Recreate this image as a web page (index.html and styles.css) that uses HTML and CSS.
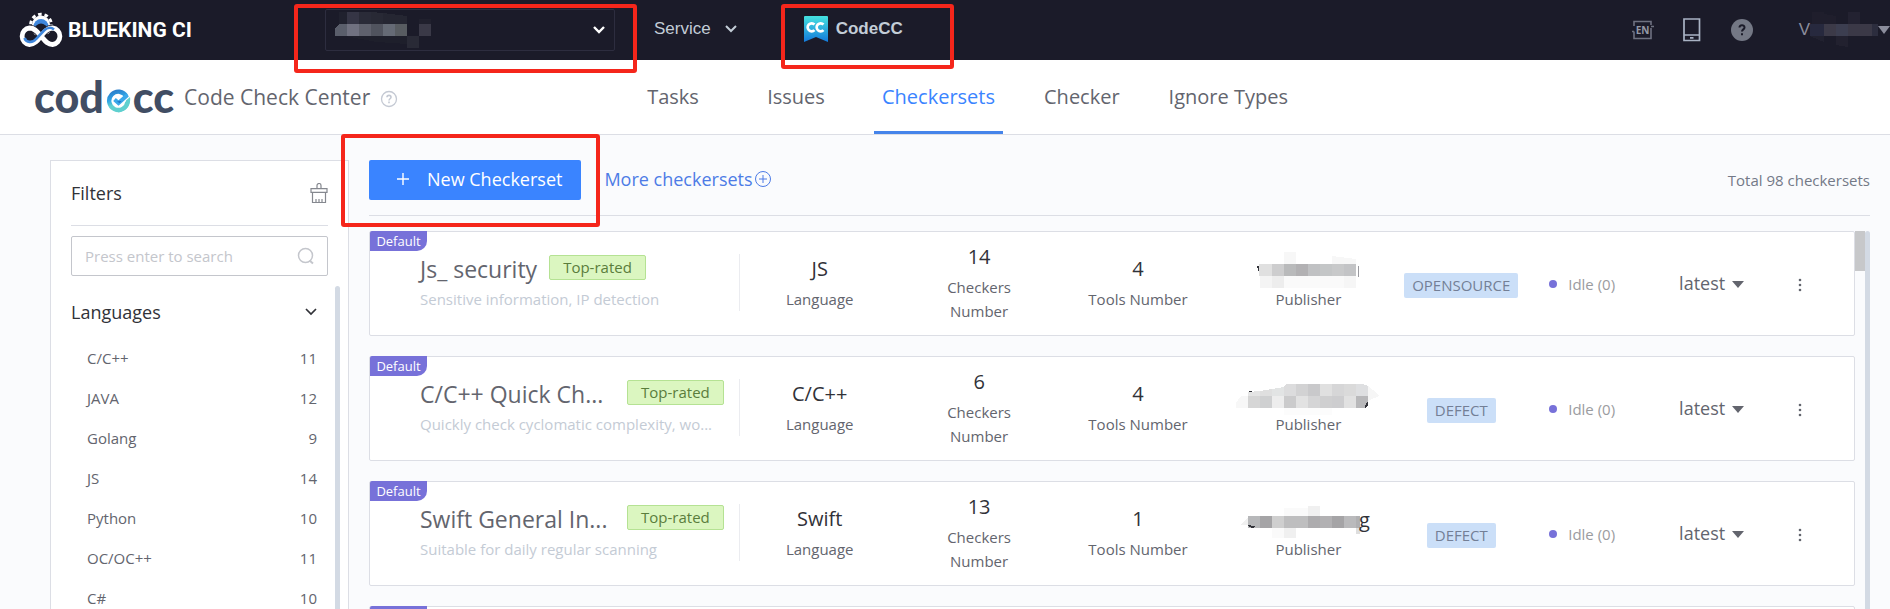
FILE: index.html
```html
<!DOCTYPE html>
<html lang="en">
<head>
<meta charset="utf-8">
<title>CodeCC - Checkersets</title>
<link rel="stylesheet" href="styles.css">
</head>
<body>
<header class="topbar">
  <a class="brand" href="#">
    <svg class="brand-mark" width="44" height="36" viewBox="0 0 44 36" aria-hidden="true">
      <circle cx="22" cy="12.500" r="9" fill="#fff"/>
      <circle cx="22" cy="12.500" r="10.300" fill="none" stroke="#fff" stroke-width="3" stroke-dasharray="3.600 2.870"/>
      <path d="M14.500 14.500a7.500 7.500 0 0 1 15 0l-7.500 8z" fill="#3f87dc"/>
      <path d="M16 17.500a6 6 0 0 1 12 0l-6 6z" fill="#1b1b29"/>
      <path d="M22 24c-3 4-6 8.500-11.500 8.500A8.300 8.300 0 0 1 10.500 16C16 16 18.500 20 22 24s6 8.500 11.500 8.500a8.300 8.300 0 0 0 0-16.500C28 16 25 20 22 24z" fill="none" stroke="#1b1b29" stroke-width="6.500"/>
      <path d="M22 24c-3 4-6 8.500-11.500 8.500A8.300 8.300 0 0 1 10.500 16C16 16 18.500 20 22 24s6 8.500 11.500 8.500a8.300 8.300 0 0 0 0-16.500C28 16 25 20 22 24z" fill="none" stroke="#fff" stroke-width="4.800"/>
      <path d="M5.500 26c1.500 4.500 8 5.500 11.500 1l8-8.500c3-3 7-3.500 10-1" fill="none" stroke="#3f87dc" stroke-width="2.600"/>
    </svg>
    <span class="brand-name">BLUEKING CI</span>
  </a>
  <div class="project">
    <select class="project-select" aria-label="Project"><option></option></select>
    <svg class="project-mask" width="96" height="36" viewBox="336 12 96 36" shape-rendering="crispEdges" aria-hidden="true">
      <path d="M340 12h8v12h-8z" fill="#20212e"/><path d="M348 12h12v12h-12z" fill="#353545"/><path d="M360 12h12v12h-12z" fill="#2a2b38"/><path d="M372 12l12 1v11h-12z" fill="#282935"/><path d="M384 13l24 3v8h-24z" fill="#252632"/>
      <path d="M336 28l4-4h8v12h-12z" fill="#5a5e6b"/><path d="M348 24h12v12h-12z" fill="#707180"/><path d="M360 24h12v12h-12z" fill="#5f616d"/><path d="M372 24h12v12h-12z" fill="#50535e"/><path d="M384 24h12v12h-12z" fill="#656a75"/><path d="M396 24h12v12h-12z" fill="#585c61"/>
      <path d="M346 36h62v8l-30-2z" fill="#1e1f2b"/><path d="M408 36h12v12h-12z" fill="#292a36"/><path d="M420 19h12v5h-12z" fill="#20202d"/><path d="M420 24h12v12h-12z" fill="#3a3947"/>
    </svg>
    <svg class="project-arrow" width="14" height="10" viewBox="0 0 14 10" aria-hidden="true"><path d="M2 2l5 5 5-5" fill="none" stroke="#fff" stroke-width="2.400"/></svg>
  </div>
  <button class="service" type="button">Service
    <svg width="14" height="10" viewBox="0 0 14 10" aria-hidden="true"><path d="M2 2l5 5 5-5" fill="none" stroke="#c3cdd7" stroke-width="2"/></svg>
  </button>
  <a class="product" href="#">
    <svg width="26" height="26" viewBox="0 0 26 26" aria-hidden="true">
      <defs><linearGradient id="flag" x1="0" y1="0" x2="0" y2="1"><stop offset="0" stop-color="#45e2e0"/><stop offset="1" stop-color="#1379db"/></linearGradient></defs>
      <path d="M2 0h22a1 1 0 0 1 1 1v25l-12-5-12 5V1a1 1 0 0 1 1-1z" fill="url(#flag)"/>
      <path d="M11.500 8.500a4 4 0 1 0 0 5.600M20.500 8.500a4 4 0 1 0 0 5.600" fill="none" stroke="#fff" stroke-width="2.700"/>
    </svg>
    <span>CodeCC</span>
  </a>
  <div class="tools">
    <button type="button" class="icon-btn" aria-label="Language">
      <svg width="22" height="22" viewBox="0 0 22 22" aria-hidden="true"><path d="M2 7V2.500h17V6M2 12.500V19.500h17V9M0 12.500h2M19 7.500h3" fill="none" stroke="#6e7180" stroke-width="1.600"/><text x="10.500" y="14.500" class="lang-code">EN</text></svg>
    </button>
    <button type="button" class="icon-btn" aria-label="Mobile">
      <svg width="18" height="24" viewBox="0 0 18 24" aria-hidden="true"><path d="M1 1h15.500v21.500H1zM1 17h16M7 19.800h3.500" fill="none" stroke="#a9b3c4" stroke-width="1.700"/></svg>
    </button>
    <button type="button" class="icon-btn" aria-label="Help">
      <svg width="24" height="24" viewBox="0 0 24 24" aria-hidden="true"><circle cx="12" cy="12" r="11" fill="#747885"/><path d="M9.500 9.600c0-3.200 5-3.200 5-.2 0 2-2.500 2-2.500 4.200" fill="none" stroke="#1b1b29" stroke-width="2"/><path d="M11 15.200h2v2h-2z" fill="#1b1b29"/></svg>
    </button>
    <button type="button" class="user" aria-label="Account"><span>V</span>
      <svg width="68" height="36" viewBox="1810 12 68 36" shape-rendering="crispEdges" aria-hidden="true">
        <path d="M1812 12h12v12h-12z" fill="#1f1e2c"/><path d="M1824 14l12 2v8h-12z" fill="#1f1e2c"/><path d="M1848 12h12v12h-12z" fill="#232231"/>
        <path d="M1810 24h14v12h-14z" fill="#27293e"/><path d="M1824 24h12v12h-12z" fill="#3c3a48"/><path d="M1836 24h12v12h-12z" fill="#3c3e50"/><path d="M1848 24h24v12h-24z" fill="#3b3947"/><path d="M1872 24h6v12h-6z" fill="#2c2d3e"/>
        <path d="M1810 36h14v6z" fill="#21212f"/><path d="M1836 36h12v11l-12-2z" fill="#22212f"/>
      </svg>
      <svg width="12" height="8" viewBox="0 0 12 8" aria-hidden="true"><path d="M0 0h12L6 8z" fill="#8b8d9c"/></svg>
    </button>
  </div>
</header>

<div class="subbar">
  <div class="title">
    <span class="wordmark"><span>cod</span><svg width="25" height="24" viewBox="0 0 24 24" aria-hidden="true">
        <defs><linearGradient id="swirl" x1="0" y1="0" x2="0.300" y2="1"><stop offset="0" stop-color="#2b7cc9"/><stop offset="0.450" stop-color="#2fa5e6"/><stop offset="0.750" stop-color="#5fd0cf"/></linearGradient></defs>
        <path d="M20 7.500A9.200 9.200 0 1 0 21 13" fill="none" stroke="url(#swirl)" stroke-width="4.400"/>
        <path d="M8 10.500l4 3.500 9-8" fill="none" stroke="#3aa8ea" stroke-width="4"/>
        <path d="M10.500 12.500l2.500 1.500 2-2z" fill="#1f6fc0"/>
        <path d="M23.500 8c1.500 9-5 14.500-11.500 15.500l-2-3.500c6 0 9-3 9.500-8.500z" fill="#5fd0cf"/>
      </svg><span>cc</span></span>
    <h1>Code Check Center</h1>
    <svg class="title-help" width="18" height="18" viewBox="0 0 18 18" aria-hidden="true"><circle cx="9" cy="9" r="7.500" fill="none" stroke="#c4c9d3" stroke-width="1.300"/><path d="M7 7.300c0-2.600 4-2.500 4-.1 0 1.500-2 1.600-2 3.300M9 11.600v1.700" fill="none" stroke="#c4c9d3" stroke-width="1.600"/></svg>
  </div>
  <nav class="nav">
    <a href="#">Tasks</a><a href="#">Issues</a><a href="#" class="active" aria-current="page">Checkersets</a><a href="#">Checker</a><a href="#">Ignore Types</a>
  </nav>
</div>

<div class="page">
  <aside class="filters">
    <div class="filters-head">
      <h2>Filters</h2>
      <button type="button" class="icon-btn" aria-label="Clear filters">
        <svg width="18" height="21" viewBox="0 0 18 21" aria-hidden="true"><path d="M7 5.500V2.500a2 2 0 0 1 4 0v3M1 5.700h16v3.600H1zM2.500 9.300v10.200h13V9.300M6 16v3.500M9 16v3.500M12 16v3.500" fill="none" stroke="#85888f" stroke-width="1.200"/></svg>
      </button>
    </div>
    <div class="search">
      <input type="text" placeholder="Press enter to search" aria-label="Search checkersets">
      <svg width="18" height="18" viewBox="0 0 18 18" aria-hidden="true"><circle cx="8.500" cy="8.500" r="7" fill="none" stroke="#c4c6cc" stroke-width="1.500"/><path d="M12.500 13.500l3.500 3" stroke="#c4c6cc" stroke-width="2"/></svg>
    </div>
    <div class="filter-scroll">
      <section class="filter-group">
        <button type="button" class="group-head">Languages
          <svg width="12" height="8" viewBox="0 0 12 8" aria-hidden="true"><path d="M1 1l5 5 5-5" fill="none" stroke="#313238" stroke-width="1.700"/></svg>
        </button>
        <ul>
          <li><span>C/C++</span><span>11</span></li>
          <li><span>JAVA</span><span>12</span></li>
          <li><span>Golang</span><span>9</span></li>
          <li><span>JS</span><span>14</span></li>
          <li><span>Python</span><span>10</span></li>
          <li><span>OC/OC++</span><span>11</span></li>
          <li><span>C#</span><span>10</span></li>
        </ul>
      </section>
      <div class="thin-bar"></div>
    </div>
  </aside>

  <main class="main">
    <div class="actions">
      <button type="button" class="primary"><svg width="14" height="14" viewBox="0 0 14 14" aria-hidden="true"><path d="M7 1v12M1 7h12" stroke="#fff" stroke-width="1.400"/></svg>New Checkerset</button>
      <a class="more-link" href="#">More checkersets<svg width="18" height="18" viewBox="0 0 18 18" aria-hidden="true"><circle cx="9" cy="9" r="7.500" fill="none" stroke="#4d7be6"/><path d="M9 5v8M5 9h8" stroke="#4d7be6"/></svg></a>
      <span class="total">Total 98 checkersets</span>
    </div>
    <div class="list-wrap">
      <div class="list">
        <article class="card">
          <span class="badge">Default</span>
          <div class="info">
            <div class="info-title"><h3>Js_ security</h3><span class="rated">Top-rated</span></div>
            <p>Sensitive information, IP detection</p>
          </div>
          <div class="stat"><b>JS</b><span>Language</span></div>
          <div class="stat"><b>14</b><span>Checkers Number</span></div>
          <div class="stat"><b>4</b><span>Tools Number</span></div>
          <div class="stat">
            <svg class="mask" width="150" height="28" viewBox="0 0 150 28" shape-rendering="crispEdges" aria-hidden="true">
              <path d="M51-3h12V9H51zM99 1l24 3v5H99z" fill="#f7f7f7"/><path d="M24 11l2 0v7z" fill="#33343a"/>
              <path d="M26 9h13v12H26z" fill="#e0e0e0"/><path d="M39 9h12v12H39z" fill="#cdcdce"/><path d="M51 9h12v12H51z" fill="#b9babb"/><path d="M63 9h12v12H63z" fill="#b2b1b3"/><path d="M75 9h12v12H75z" fill="#c0c1c3"/><path d="M87 9h12v12H87z" fill="#c4c6c7"/><path d="M99 9h12v12H99z" fill="#c8c9ca"/><path d="M111 9h12v12h-12z" fill="#c3c4c6"/><path d="M125 11h1v11h-1z" fill="#9a9aa0"/>
              <path d="M27 21h12v12H27z" fill="#f4f4f4"/><path d="M39 21h12v12H39z" fill="#ededed"/><path d="M51 21h60v12H51z" fill="#fafafa"/><path d="M111 21h12v12h-12z" fill="#f6f6f6"/>
            </svg><span>Publisher</span></div>
          <div class="tag-cell"><span class="tag">OPENSOURCE</span></div>
          <div class="status"><i></i>Idle (0)</div>
          <button type="button" class="version">latest<svg width="12" height="7" viewBox="0 0 12 7" aria-hidden="true"><path d="M0 0h12L6 7z" fill="#63656e"/></svg></button>
          <button type="button" class="kebab" aria-label="More"><svg width="4" height="14" viewBox="0 0 4 14" aria-hidden="true"><circle cx="2" cy="2" r="1.300"/><circle cx="2" cy="7" r="1.300"/><circle cx="2" cy="12" r="1.300"/></svg></button>
        </article>
        <article class="card">
          <span class="badge">Default</span>
          <div class="info">
            <div class="info-title clipped"><h3>C/C++ Quick Ch...</h3><span class="rated">Top-rated</span></div>
            <p>Quickly check cyclomatic complexity, wo...</p>
          </div>
          <div class="stat"><b>C/C++</b><span>Language</span></div>
          <div class="stat"><b>6</b><span>Checkers Number</span></div>
          <div class="stat"><b>4</b><span>Tools Number</span></div>
          <div class="stat">
            <svg class="mask" width="150" height="28" viewBox="0 0 150 28" shape-rendering="crispEdges" aria-hidden="true">
              <path d="M15 12l12-1v5H15z" fill="#e4e4e4"/><path d="M27 11l12-2v7H27z" fill="#dfdfdf"/><path d="M39 9l12-2v9H39z" fill="#e2e4e4"/><path d="M51 6l2-2h10v12H51z" fill="#dcdcdd"/><path d="M63 4h12v12H63z" fill="#d2d2d3"/><path d="M75 4h12v12H75z" fill="#c9c9cb"/><path d="M87 4h12v12H87z" fill="#e0e0e0"/><path d="M99 4h12v12H99z" fill="#d6d6d7"/><path d="M111 4h12v12h-12z" fill="#dadada"/><path d="M123 4h7l5 2v10h-12z" fill="#dedfe1"/><path d="M135 6l9 7 2 3-11 5z" fill="#f6f6f6"/>
              <path d="M3 28v-5l5-7h7v12z" fill="#f7f7f7"/><path d="M15 16h12v12H15z" fill="#d6d6d6"/><path d="M27 16h12v12H27z" fill="#cfd0d1"/><path d="M39 16h12v12H39z" fill="#ededed"/><path d="M51 16h12v12H51z" fill="#cbcbcc"/><path d="M63 16h12v12H63z" fill="#e2e2e2"/><path d="M75 16h12v12H75z" fill="#d5d5d6"/><path d="M87 16h12v12H87z" fill="#cfcfd0"/><path d="M99 16h12v12H99z" fill="#cdcdcf"/><path d="M111 16h12v12h-12z" fill="#e1e1e1"/><path d="M123 16h12v8l-2 4h-10z" fill="#b8b8ba"/>
              <path d="M16 11h3v1h-3zM135 21v4l-3 3v-2z" fill="#33343a"/><path d="M51 28h48v7H51z" fill="#fcfcfc"/>
            </svg><span>Publisher</span></div>
          <div class="tag-cell"><span class="tag">DEFECT</span></div>
          <div class="status"><i></i>Idle (0)</div>
          <button type="button" class="version">latest<svg width="12" height="7" viewBox="0 0 12 7" aria-hidden="true"><path d="M0 0h12L6 7z" fill="#63656e"/></svg></button>
          <button type="button" class="kebab" aria-label="More"><svg width="4" height="14" viewBox="0 0 4 14" aria-hidden="true"><circle cx="2" cy="2" r="1.300"/><circle cx="2" cy="7" r="1.300"/><circle cx="2" cy="12" r="1.300"/></svg></button>
        </article>
        <article class="card">
          <span class="badge">Default</span>
          <div class="info">
            <div class="info-title clipped"><h3>Swift General In...</h3><span class="rated">Top-rated</span></div>
            <p>Suitable for daily regular scanning</p>
          </div>
          <div class="stat"><b>Swift</b><span>Language</span></div>
          <div class="stat"><b>13</b><span>Checkers Number</span></div>
          <div class="stat"><b>1</b><span>Tools Number</span></div>
          <div class="stat">
            <svg class="mask" width="150" height="28" viewBox="0 0 150 28" shape-rendering="crispEdges" aria-hidden="true">
              <path d="M51 3h24v8H51zM39 23h12v10H39z" fill="#fafafa"/><path d="M75 1h12v10H75zM51 23h12v10H51zM7 20l8-8v8z" fill="#f0f0f0"/>
              <path d="M15 11h12v12H15z" fill="#b7b8ba"/><path d="M27 11h12v12H27z" fill="#a5a4a6"/><path d="M39 11h12v12H39z" fill="#cfcfcf"/><path d="M51 11h24v12H51z" fill="#bebebf"/><path d="M75 11h12v12H75z" fill="#adacae"/><path d="M87 11h12v12H87z" fill="#b2b1b3"/><path d="M99 11h12v12H99z" fill="#a5a4a6"/><path d="M111 11h12v12h-12z" fill="#bababc"/><path d="M123 11h4v12h-4z" fill="#b0b0b2"/><path d="M123 23h4v6h-4z" fill="#dedede"/>
              <path d="M15 20h2l2 1h3v1l-3 1-3-1z" fill="#33343a"/><text x="126" y="22" class="mask-text">g</text>
            </svg><span>Publisher</span></div>
          <div class="tag-cell"><span class="tag">DEFECT</span></div>
          <div class="status"><i></i>Idle (0)</div>
          <button type="button" class="version">latest<svg width="12" height="7" viewBox="0 0 12 7" aria-hidden="true"><path d="M0 0h12L6 7z" fill="#63656e"/></svg></button>
          <button type="button" class="kebab" aria-label="More"><svg width="4" height="14" viewBox="0 0 4 14" aria-hidden="true"><circle cx="2" cy="2" r="1.300"/><circle cx="2" cy="7" r="1.300"/><circle cx="2" cy="12" r="1.300"/></svg></button>
        </article>
        <article class="card"><span class="badge"></span></article>
      </div>
      <div class="thick-bar"></div>
      <div class="thin-bar"></div>
    </div>
  </main>
</div>

<div class="callout callout-project"></div>
<div class="callout callout-product"></div>
<div class="callout callout-new"></div>
</body>
</html>
```

FILE: styles.css
```css
* { box-sizing: border-box; }

body {
  margin: 0;
  height: 100vh;
  overflow: hidden;
  display: flex;
  flex-direction: column;
  position: relative;
  background: #fafbfd;
  color: #63656e;
  font: 15px/24px "Open Sans", "Noto Sans", sans-serif;
}

h1, h2, h3, p, ul { margin: 0; padding: 0; font-weight: 400; }
ul { list-style: none; }
a { color: inherit; text-decoration: none; }
svg { display: block; flex: none; }
button {
  margin: 0;
  padding: 0;
  border: 0;
  background: none;
  color: inherit;
  font: inherit;
  cursor: pointer;
}

/* Top bar */
.topbar {
  flex: none;
  height: 60px;
  display: flex;
  align-items: center;
  background: #1b1b29;
  color: #c3cdd7;
  font: 17px/24px "Liberation Sans", Arial, sans-serif;
}
.brand {
  width: 325px;
  padding-left: 19px;
  display: flex;
  align-items: center;
  gap: 5px;
}
.brand-name {
  color: #fff;
  font: bold 21px/28px Roboto, "Liberation Sans", sans-serif;
}
.project { position: relative; width: 290px; }
.project-select {
  display: block;
  width: 100%;
  height: 42px;
  appearance: none;
  background: transparent;
  border: 1px solid #2d2d3f;
  border-radius: 2px;
  color: #fff;
}
.project-mask { position: absolute; left: 10px; top: 3px; pointer-events: none; }
.project-arrow { position: absolute; right: 9px; top: 16px; pointer-events: none; }
.service { display: flex; align-items: center; gap: 13px; margin-left: 39px; padding-bottom: 2px; }
.product { display: flex; align-items: center; gap: 7px; margin-left: 65px; padding-bottom: 3px; font-weight: 700; }
.tools { margin-left: auto; display: flex; align-items: center; gap: 29px; }
.lang-code { font: bold 10px "Open Sans", sans-serif; fill: #9599a5; text-anchor: middle; }
.user { display: flex; align-items: center; margin-left: 16px; color: #8b8d9c; }

/* Product bar */
.subbar {
  flex: none;
  height: 75px;
  display: flex;
  background: #fff;
  border-bottom: 1px solid #dcdee5;
}
.title { width: 628px; padding-left: 34px; display: flex; align-items: center; gap: 10px; }
.title h1 { font-size: 21px; line-height: 28px; }
.title-help { margin-top: 4px; }
.wordmark { display: flex; align-items: baseline; gap: 2px; color: #414d63; font: 900 43px/48px Lato, sans-serif; }
.nav { display: flex; gap: 33px; font-size: 20px; }
.nav a {
  min-width: 90px;
  padding: 0 8px;
  display: flex;
  align-items: center;
  justify-content: center;
  border-top: 3px solid transparent;
  border-bottom: 3px solid transparent;
}
.nav .active { color: #3a84ff; border-bottom-color: #4584ea; }

/* Page */
.page { flex: 1; min-height: 0; display: flex; gap: 19px; padding: 25px 20px 0 50px; }

.filters {
  flex: none;
  width: 299px;
  display: flex;
  flex-direction: column;
  overflow: hidden;
  background: #fff;
  border: 1px solid #dcdee5;
  border-bottom: 0;
}
.filters-head {
  flex: none;
  height: 65px;
  margin: 0 20px;
  display: flex;
  align-items: center;
  justify-content: space-between;
  border-bottom: 1px solid #dcdee5;
}
.filters h2 { color: #313238; font-size: 18px; }
.search { flex: none; position: relative; margin: 10px 20px; }
.search input {
  display: block;
  width: 100%;
  height: 40px;
  padding: 0 40px 0 13px;
  border: 1px solid #c4c6cc;
  border-radius: 2px;
  background: #fff;
  color: #63656e;
  font: inherit;
}
.search input::placeholder { color: #c4c6cc; opacity: 1; }
.search svg { position: absolute; right: 13px; top: 11px; }
.filter-scroll { flex: 1; min-height: 0; display: flex; gap: 18px; padding: 0 8px 0 20px; }
.filter-group { flex: 1; }
.group-head {
  width: 100%;
  height: 52px;
  display: flex;
  align-items: center;
  justify-content: space-between;
  color: #313238;
  font-size: 18px;
}
.filter-group li { height: 40px; display: flex; align-items: center; justify-content: space-between; padding-left: 16px; }
.thin-bar { flex: none; width: 5px; border-radius: 3px 3px 0 0; background: #d3dae4; }

.main { flex: 1; min-width: 0; margin-left: 1px; display: flex; flex-direction: column; }
.actions {
  flex: none;
  height: 56px;
  display: flex;
  align-items: flex-start;
  line-height: 38px;
  border-bottom: 1px solid #dcdee5;
  font-size: 18px;
}
.primary {
  height: 40px;
  padding: 0 19px 2px 27px;
  display: flex;
  align-items: center;
  gap: 17px;
  border-radius: 2px;
  background: #3a84ff;
  color: #fff;
}
.more-link { margin-left: 23px; display: flex; align-items: center; gap: 1px; color: #4d7be6; }
.total { margin-left: auto; color: #737987; font-size: 15px; line-height: 40px; }

.list-wrap { flex: 1; min-height: 0; margin-top: 15px; display: flex; overflow: hidden; }
.list { flex: 1; min-width: 0; display: flex; flex-direction: column; gap: 20px; }
.thick-bar { flex: none; width: 10px; height: 40px; background: #c7c8ca; }

.card {
  flex: none;
  position: relative;
  height: 105px;
  padding: 0 0 2px 50px;
  display: grid;
  grid-template-columns: 320fr 160fr 159fr 159fr 182fr 124fr 156fr 106fr 69fr;
  align-items: center;
  background: #fff;
  border: 1px solid #dcdee5;
  border-radius: 2px;
}
.badge {
  position: absolute;
  left: 0;
  top: -1px;
  width: 57px;
  height: 20px;
  border-radius: 2px 0 10px 0;
  background: #7771d9;
  color: #fff;
  font-size: 13px;
  line-height: 20px;
  text-align: center;
}
.info { min-width: 0; padding-right: 15px; border-right: 1px solid #ebecf0; }
.info-title { display: flex; align-items: flex-start; gap: 12px; height: 33px; }
.info-title h3 { flex: 0 1 auto; white-space: nowrap; font-size: 23px; line-height: 30px; }
.info-title.clipped h3 { flex: 1; min-width: 0; }
.rated {
  flex: none;
  margin-top: 1px;
  padding: 0 13px;
  border: 1px solid #b5e293;
  border-radius: 2px;
  background: #dbf6c0;
  color: #5a7d3c;
  line-height: 23px;
}
.info p { color: #c4cbd5; white-space: nowrap; }
.stat { display: flex; flex-direction: column; align-items: center; gap: 4px; text-align: center; }
.stat b { color: #313238; font-weight: 400; font-size: 20px; line-height: 28px; }
.stat span { max-width: 100px; }
.mask { overflow: visible; }
.mask-text { fill: #313238; font-size: 20px; }
.tag-cell { display: flex; justify-content: center; padding-top: 6px; }
.tag { padding: 0 8px; border-radius: 2px; background: #cbdff8; color: #737f96; line-height: 25px; }
.status { display: flex; align-items: center; gap: 11px; padding: 2px 0 0 26px; color: #9b9ca0; }
.status i { width: 8px; height: 8px; border-radius: 50%; background: #7771d9; }
.version { display: flex; align-items: center; gap: 7px; font-size: 18px; }
.version svg { margin-top: 4px; }
.kebab { width: 30px; padding-top: 5px; display: flex; justify-content: center; fill: #63656e; }

/* Highlight frames laid over the page */
.callout { position: absolute; border: 4px solid #f5261b; border-radius: 3px; pointer-events: none; }
.callout-project { left: 294px; top: 4px; width: 343px; height: 69px; }
.callout-product { left: 781px; top: 4px; width: 173px; height: 65px; }
.callout-new { left: 341px; top: 134px; width: 259px; height: 93px; }
```
